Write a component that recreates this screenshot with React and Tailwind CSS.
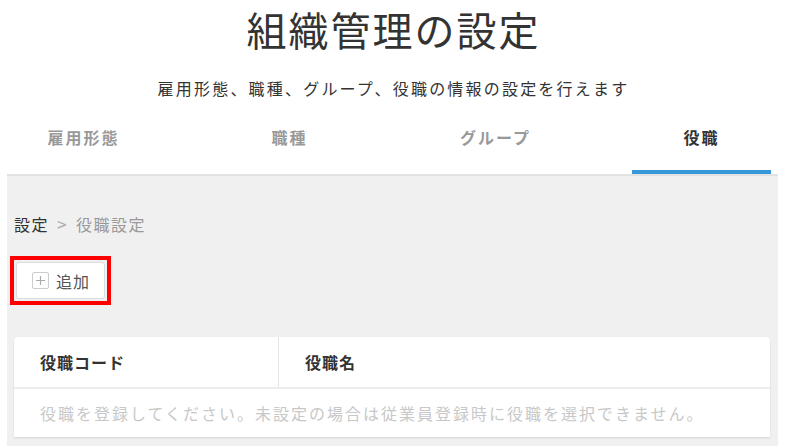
export default function App() {
  const font = { fontFamily: '"Noto Sans CJK JP", "Noto Sans", sans-serif' };
  const tabs = ["雇用形態", "職種", "グループ", "役職"];
  return (
    <div className="w-[787px] h-[446px] overflow-hidden bg-white text-[#333]" style={font}>
      <div className="h-[58px] text-center text-[40px] leading-[58px] tracking-[2px] text-[#333]">
        組織管理の設定
      </div>
      <div className="mt-[18px] h-[24px] text-center text-[16px] leading-[24px] tracking-[2.2px] text-[#333]">
        雇用形態、職種、グループ、役職の情報の設定を行えます
      </div>
      <div className="ml-[14px] flex w-[757px] justify-between">
        {tabs.map((t, i) => (
          <div key={t} className="flex h-[74px] w-[139px] flex-col items-center justify-between">
            <div
              className={
                "pt-[25px] text-[16px] font-bold leading-[24px] tracking-[2px] " +
                (i === 3 ? "text-[#333]" : "text-[#999]")
              }
            >
              {t}
            </div>
            <div className={"h-[4px] w-full " + (i === 3 ? "bg-[#3498db]" : "bg-transparent")} />
          </div>
        ))}
      </div>
      <div className="ml-[7px] h-[272px] w-[771px] border-t-2 border-[#e2e2e2] bg-[#f0f0f0] px-[7px]">
        <div className="flex items-center pt-[36px] text-[16px] leading-[24px] tracking-[1.5px]">
          <span className="text-[#333]">設定</span>
          <span className="mx-[8px] text-[17px] text-[#aaa]">&gt;</span>
          <span className="text-[#999]">役職設定</span>
        </div>
        <div className="ml-[-4px] mt-[20px] w-[101px] border-4 border-[#ff0000] p-[2px]">
          <button className="flex h-[37px] w-[89px] items-center rounded-[3px] border border-[#dcdcdc] bg-white pl-[15px] text-[16px] leading-[24px] tracking-[1px] text-[#555]">
            <span className="mr-[7px] flex h-[17px] w-[17px] items-center justify-center rounded-[2px] border border-[#ccc]">
              <svg width="11" height="11" viewBox="0 0 11 11">
                <path d="M5.5 1v9M1 5.5h9" stroke="#aaa" strokeWidth="1.2" />
              </svg>
            </span>
            追加
          </button>
        </div>
        <div className="mt-[32px] w-[756px] rounded-t-[4px] bg-white shadow-[0_1px_2px_rgba(0,0,0,0.12)]">
          <div className="flex h-[52px] border-b-2 border-[#ececec]">
            <div className="flex w-[265px] items-center border-r border-[#e5e5e5] pl-[26px] text-[16px] font-bold tracking-[1px] text-[#333]">
              役職コード
            </div>
            <div className="flex items-center pl-[26px] text-[16px] font-bold tracking-[1px] text-[#333]">
              役職名
            </div>
          </div>
          <div className="flex h-[48px] items-center pl-[26px] text-[16px] tracking-[2px] text-[#c8c8c8]">
            役職を登録してください。未設定の場合は従業員登録時に役職を選択できません。
          </div>
        </div>
      </div>
    </div>
  );
}
